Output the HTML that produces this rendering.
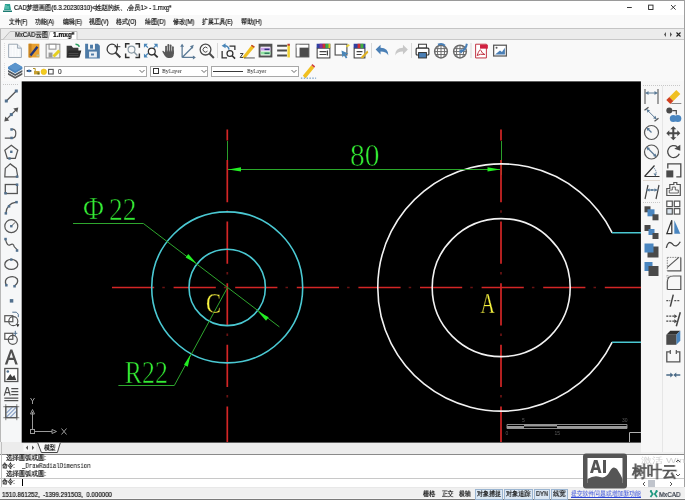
<!DOCTYPE html><html><head><meta charset="utf-8"><style>
*{box-sizing:border-box}
html,body{margin:0;padding:0}
body{width:685px;height:500px;overflow:hidden;position:relative;background:#f0f0f0;font-family:"Liberation Sans",sans-serif;color:#000}
.a{position:absolute}
.t{position:absolute;white-space:nowrap;line-height:1;-webkit-font-smoothing:antialiased;will-change:transform;-webkit-text-stroke:0.2px currentColor}
</style></head><body>
<div class="a" style="left:0px;top:0px;width:685px;height:15px;background:#fff"></div>
<div class="a" style="left:0px;top:0px;width:685px;height:1px;background:#9a9a9a"></div>
<div class="a" style="left:0px;top:15px;width:685px;height:13px;background:#f9f9f9"></div>
<div class="a" style="left:0px;top:28px;width:685px;height:12px;background:#ececec"></div>
<div class="a" style="left:0px;top:28px;width:685px;height:1px;background:#c4c4c4"></div>
<div class="a" style="left:0px;top:39px;width:685px;height:1px;background:#c8c8c8"></div>
<div class="a" style="left:0px;top:40px;width:685px;height:41px;background:#f9f9f9"></div>
<div class="a" style="left:0px;top:81px;width:22px;height:361px;background:#f6f7f8"></div>
<div class="a" style="left:0px;top:29px;width:1px;height:458px;background:#b8b8b8"></div>
<div class="a" style="left:641px;top:81px;width:43px;height:371px;background:#f7f7f7"></div>
<div class="a" style="left:662px;top:86px;width:1px;height:366px;background:#e6e6e6"></div>
<div class="a" style="left:684px;top:0px;width:1px;height:500px;background:#a0a0a0"></div>
<div class="a" style="left:22px;top:80px;width:619px;height:1px;background:#fff"></div>
<div class="a" style="left:0px;top:442px;width:641px;height:12px;background:#ececec"></div>
<div class="a" style="left:0px;top:454px;width:684px;height:33px;background:#fff"></div>
<div class="a" style="left:0px;top:453.5px;width:684px;height:1px;background:#8a8a8a"></div>
<div class="a" style="left:1px;top:442px;width:1px;height:45px;background:#c0c0c0"></div>
<div class="a" style="left:0px;top:477.5px;width:684px;height:1px;background:#c8c8c8"></div>
<div class="a" style="left:0px;top:487px;width:685px;height:13px;background:#f0f0f0"></div>
<div class="a" style="left:0px;top:487px;width:684px;height:1px;background:#e8e8e8"></div>
<div class="a" style="left:0px;top:498px;width:685px;height:1px;background:#f6f6f6"></div>
<div class="a" style="left:0px;top:499px;width:685px;height:1px;background:#7a7a7a"></div>
<svg class="a" style="left:0;top:0;will-change:transform" width="685" height="500" viewBox="0 0 685 500"><rect x="21.7" y="81.4" width="619.2" height="361.2" fill="#000"/><defs><clipPath id="cc"><rect x="22" y="81.5" width="619" height="361"/></clipPath></defs><g clip-path="url(#cc)" fill="none"><line x1="227.5" y1="141" x2="227.5" y2="175" stroke="#2a9e2a" stroke-width="1"/><line x1="501.5" y1="141" x2="501.5" y2="175" stroke="#2a9e2a" stroke-width="1"/><g stroke="#d42626" stroke-width="1.7"><line x1="112" y1="287.5" x2="641" y2="287.5" stroke-dasharray="42.2 19.4"/><line x1="227.3" y1="129.4" x2="227.3" y2="442" stroke-dasharray="42.2 19.4" stroke-dashoffset="31"/><line x1="501" y1="129.4" x2="501" y2="442" stroke-dasharray="42.2 19.4" stroke-dashoffset="31"/></g><g stroke="#d42626" stroke-width="1.7" opacity="0.5"><line x1="112" y1="287.5" x2="641" y2="287.5" stroke-dasharray="2.5 59.1" stroke-dashoffset="11.3"/><line x1="227.3" y1="205" x2="227.3" y2="442" stroke-dasharray="2.5 59.1" stroke-dashoffset="56.3"/><line x1="501" y1="205" x2="501" y2="442" stroke-dasharray="2.5 59.1" stroke-dashoffset="56.3"/></g><circle cx="227.2" cy="287.4" r="75.5" stroke="#4ac8d2" stroke-width="1.6"/><circle cx="227.2" cy="287.4" r="38.2" stroke="#4ac8d2" stroke-width="1.6"/><circle cx="501.2" cy="287.6" r="69" stroke="#f2f2f2" stroke-width="1.6"/><path d="M612.2 232.8 A123.6 123.6 0 1 0 612.2 342.2" stroke="#f2f2f2" stroke-width="1.6"/><line x1="612" y1="232.8" x2="641" y2="232.8" stroke="#4ac8d2" stroke-width="1.5"/><line x1="612" y1="342.2" x2="641" y2="342.2" stroke="#4ac8d2" stroke-width="1.5"/><line x1="228" y1="169.5" x2="500" y2="169.5" stroke="#2aa82a" stroke-width="1"/><path d="M228.3 169.4 L241 167.2 L241 171.6 Z" fill="#22ee22"/><path d="M500.2 169.4 L487.5 167.2 L487.5 171.6 Z" fill="#22ee22"/><polyline points="73,223.5 143.4,223.5 279.4,326.9" stroke="#2ea62e" stroke-width="1"/><path d="M196.5 263.5 L185.6 257.5 L188.3 254 Z" fill="#22ee22"/><path d="M257.8 311.2 L268.7 317.2 L266 320.7 Z" fill="#22ee22"/><polyline points="118.4,385.5 174.3,385.5 227.5,287.5" stroke="#2ea62e" stroke-width="1"/><path d="M190.6 354.5 L184 364.8 L187.8 366.8 Z" fill="#22ee22"/></g><g font-family="Liberation Serif" fill="#33ea33" stroke="#000" stroke-width="0.55"><text x="83" y="218.5" font-size="31" textLength="21" lengthAdjust="spacingAndGlyphs">Φ</text><text x="109" y="220.3" font-size="31" textLength="27.5" lengthAdjust="spacingAndGlyphs">22</text><text x="350" y="166" font-size="31" textLength="29.5" lengthAdjust="spacingAndGlyphs">80</text><text x="124.8" y="382.5" font-size="31.5" textLength="43" lengthAdjust="spacingAndGlyphs">R22</text></g><g font-family="Liberation Serif" fill="#f8f440" stroke="#000" stroke-width="0.35"><text x="206" y="312.8" font-size="29" textLength="15" lengthAdjust="spacingAndGlyphs">C</text><text x="480.5" y="312.8" font-size="29" textLength="14.5" lengthAdjust="spacingAndGlyphs">A</text></g><g stroke="#9a9a9a" stroke-width="1" fill="none"><rect x="30.5" y="429.5" width="4" height="4"/><line x1="32.5" y1="429.5" x2="32.5" y2="412"/><path d="M30.5 414 L32.5 409.5 L34.5 414 Z"/><line x1="34.5" y1="431.5" x2="52" y2="431.5"/><path d="M52 429.5 L56.5 431.5 L52 433.5 Z"/><path d="M30.5 398 L32.5 401 L34.5 398 M32.5 401 V404"/><path d="M61.5 428.5 L66.5 434.5 M66.5 428.5 L61.5 434.5"/></g><g fill="none" stroke="#8a8a8a" stroke-width="1"><path d="M507 424.5H627M507 428.5H627M507 424.5V428.5M627 424.5V428.5"/></g><rect x="507" y="426" width="17" height="2.5" fill="#9a9a9a"/><rect x="524" y="424.5" width="33" height="2" fill="#9a9a9a"/><rect x="557" y="426" width="70" height="2.5" fill="#9a9a9a"/><g font-family="Liberation Sans" font-size="5" fill="#5a5a5a"><text x="522" y="421.5">5</text><text x="622" y="421.5">30</text><text x="505.5" y="435">0</text><text x="554.5" y="435">15</text></g><path d="M629.5 442V432.5H641" stroke="#b0b0b0" fill="none"/><g transform="translate(7.16,42.760000000000005) scale(0.98)"><path d="M1.5 1.5h9l4 4v9.5h-13z" fill="#fbfcfd" stroke="#9aa6b2"/><path d="M4 3v11M7 3v11M10 6v8M13 6v8" stroke="#e8edf2" stroke-width=".6"/><path d="M10.5 1.5v4h4" fill="#e4eaf0" stroke="#9aa6b2"/></g><g transform="translate(25.66,42.760000000000005) scale(0.98)"><rect x="3" y="1" width="11" height="14" fill="#e8a030"/><rect x="3" y="1" width="3" height="14" fill="#c98420"/><path d="M12 4 L5 13" stroke="#23367a" stroke-width="2.4"/><path d="M11 13h3" stroke="#b9c4a0" stroke-width="2"/></g><g transform="translate(44.66,42.760000000000005) scale(0.98)"><rect x="1.5" y="1.5" width="14" height="14" fill="#f4f4f4" stroke="#8c8c8c"/><rect x="4.5" y="1.5" width="7" height="5" fill="#fff" stroke="#8c8c8c"/><rect x="4" y="10" width="4" height="5" fill="#9a9a9a"/><path d="M9 14 L15 8" stroke="#e6d020" stroke-width="3"/></g><g transform="translate(65.66,42.760000000000005) scale(0.98)"><path d="M1 3h5l1.5 2H13v10H1z" fill="#3a3a3a"/><path d="M1 15 L3 8h13l-2 7z" fill="#2a2a2a"/><path d="M3 11h10M3 13h10" stroke="#555" stroke-width=".8"/><path d="M10 1.5 Q13 1.5 14 4" stroke="#2aa060" stroke-width="1.5" fill="none"/></g><g transform="translate(84.16,42.760000000000005) scale(0.98)"><path d="M1 1h3v6h7V1h3l2 2v13H1z" fill="#4d7aa6"/><rect x="6" y="2" width="3" height="4" fill="#4d7aa6"/><rect x="5" y="9" width="8" height="6" fill="#e8eef4"/><rect x="7" y="11" width="3" height="2" fill="#4d7aa6"/></g><g transform="translate(105.66,42.760000000000005) scale(0.98)"><circle cx="6.5" cy="6.5" r="5" fill="none" stroke="#3c3c3c" stroke-width="1.3"/><path d="M10 10 L15 15" stroke="#3c3c3c" stroke-width="2"/><path d="M12 1v6M9 4h6" stroke="#3c3c3c" stroke-width="1"/></g><g transform="translate(124.66,42.760000000000005) scale(0.98)"><path d="M1 5V1h4M11 1h4v4M15 11v4h-4M5 15H1v-4" fill="none" stroke="#303030" stroke-width="1.5"/><circle cx="7" cy="7" r="3.5" fill="none" stroke="#8a9aa5" stroke-width="1.2"/><path d="M9.5 9.5 L13 13" stroke="#8a9aa5" stroke-width="1.5"/></g><g transform="translate(142.96,42.760000000000005) scale(0.98)"><path d="M1 1h4L1 5z M15 1h-4l4 4z M1 15h4l-4-4z" fill="#4a86b8"/><path d="M2 2l3 3M14 2l-3 3M2 14l3-3" stroke="#4a86b8" stroke-width="1.3"/><circle cx="9" cy="9" r="3.5" fill="#fff" stroke="#303030" stroke-width="1.3"/><path d="M11.5 11.5 L15 15" stroke="#303030" stroke-width="1.8"/></g><g transform="translate(160.66,42.760000000000005) scale(0.98)"><g fill="#585858"><rect x="4.6" y="3" width="1.9" height="8" rx=".9"/><rect x="6.9" y="1.2" width="1.9" height="9" rx=".9"/><rect x="9.2" y="1.8" width="1.9" height="9" rx=".9"/><rect x="11.5" y="3.6" width="1.9" height="8" rx=".9"/><path d="M4.6 8 H13.4 V11.5 Q13.4 15.5 9.5 15.5 H7.5 Q5.5 15.5 4 13 L1.8 9.3 Q1.5 8 2.8 8.3 L4.6 10z"/></g><path d="M6.7 4v5M9 3v6M11.3 4v5" stroke="#f4f4f4" stroke-width=".35"/></g><g transform="translate(180.16,42.760000000000005) scale(0.98)"><path d="M2 15V2M2 15h13M2 15L13 4" stroke="#5b7a96" stroke-width="1.3" fill="none"/><path d="M0 4l2-3 2 3zM13 13l3 2-3 2zM10 3.5l4-1.5-1.5 4z" fill="#5b7a96"/></g><g transform="translate(198.66,42.760000000000005) scale(0.98)"><circle cx="7" cy="7" r="5.5" fill="none" stroke="#4a4a4a" stroke-width="1.3"/><path d="M11 11 L15.5 15.5" stroke="#4a4a4a" stroke-width="2"/><path d="M9 5.5 A2.5 2.5 0 1 0 9 8.5" fill="none" stroke="#4a4a4a" stroke-width="1"/></g><g transform="translate(220.66,42.760000000000005) scale(0.98)"><path d="M9 3.5h5.5v4M1.5 8.5v7h5" fill="none" stroke="#303030" stroke-width="1.3"/><path d="M1 3 L5 0.5 V5.5z" fill="#4a86b8"/><path d="M4 3 Q8 3 8.5 7" fill="none" stroke="#4a86b8" stroke-width="1.6"/><circle cx="9.5" cy="11" r="3" fill="none" stroke="#303030" stroke-width="1.3"/><path d="M11.7 13.2l3 3" stroke="#303030" stroke-width="1.6"/></g><g transform="translate(239.16,42.760000000000005) scale(0.98)"><path d="M3 15 L13 2 L16 4 L6 16z" fill="#f0c020"/><path d="M13 2 L16 4 L15 5 L12 3z" fill="#c04030"/><path d="M1 11h3l-3 4h3" fill="none" stroke="#333" stroke-width="1"/><path d="M5 15.5h11" stroke="#555" stroke-width="1"/></g><g transform="translate(257.66,42.760000000000005) scale(0.98)"><rect x="1" y="1" width="14" height="14" fill="#505050"/><rect x="3" y="4" width="10" height="9" fill="#fff"/><rect x="3" y="5" width="10" height="3" fill="#c8a0e8"/><rect x="3" y="9" width="10" height="3" fill="#90e0a0"/><rect x="7" y="6" width="5" height="1.5" fill="#303080"/><rect x="7" y="10" width="5" height="1.5" fill="#308060"/></g><g transform="translate(276.16,42.760000000000005) scale(0.98)"><path d="M1 3h10M1 8h10M1 13h10" stroke="#4c4c4c" stroke-width="2"/><rect x="11.5" y="2" width="2.5" height="13" fill="#f0d030"/><rect x="11.5" y="1" width="2.5" height="2" fill="#c04030"/></g><g transform="translate(294.66,42.760000000000005) scale(0.98)"><rect x="1.5" y="1.5" width="13" height="13" fill="#4c4c4c" stroke="#555"/><rect x="2" y="2" width="12" height="3" fill="#fff"/><rect x="2" y="2" width="3" height="12" fill="#fff"/></g><g transform="translate(315.66,42.760000000000005) scale(0.98)"><rect x="1.5" y="5.5" width="13" height="10" fill="#fff" stroke="#333"/><rect x="1" y="1" width="14" height="4.5" fill="#3040a0"/><rect x="4" y="1" width="3" height="4.5" fill="#8030a0"/><rect x="7" y="1" width="3" height="4.5" fill="#d03030"/><rect x="10" y="1" width="3" height="4.5" fill="#40b040"/><rect x="13" y="1" width="2" height="4.5" fill="#e0c020"/><path d="M4 9h7M4 12h7M12 8v5" stroke="#444" stroke-width="1.2"/></g><g transform="translate(333.66,42.760000000000005) scale(0.98)"><rect x="1.5" y="1.5" width="12" height="11" fill="#fff" stroke="#555" stroke-width="1.2"/><path d="M8 8 L15 11 L12 12 L14 15 L12.5 16 L10.5 13 L9 15z" fill="#4a86b8"/><path d="M13 4l3-2" stroke="#e8d040" stroke-width="2"/></g><g transform="translate(352.66,42.760000000000005) scale(0.98)"><rect x="1.5" y="5.5" width="11" height="10" fill="#fff" stroke="#333"/><rect x="1" y="1" width="12" height="4.5" fill="#3040a0"/><rect x="5" y="1" width="3" height="4.5" fill="#d03030"/><rect x="8" y="1" width="3" height="4.5" fill="#40b040"/><path d="M4 9h6M4 12h5" stroke="#444" stroke-width="1.2"/><path d="M8 15 L15 8 L16 10 L10 16z" fill="#e0b020"/></g><g transform="translate(374.66,42.760000000000005) scale(0.98)"><path d="M1 7 L6 2 L6 5 Q14 5 14 13 Q12 9 6 9 L6 12z" fill="#4a7fb5"/></g><g transform="translate(393.16,42.760000000000005) scale(0.98)"><path d="M15 7 L10 2 L10 5 Q2 5 2 13 Q4 9 10 9 L10 12z" fill="#c8c8c8"/></g><g transform="translate(414.66,42.760000000000005) scale(0.98)"><rect x="4" y="1.5" width="8" height="4" fill="#fff" stroke="#333"/><rect x="1.5" y="5.5" width="13" height="7" rx="1" fill="#fff" stroke="#333" stroke-width="1.2"/><rect x="4" y="10" width="8" height="5.5" fill="#4a7fb5" stroke="#333"/></g><g transform="translate(433.16,42.760000000000005) scale(0.98)"><circle cx="8" cy="9" r="6.5" fill="#fff" stroke="#6a6a6a" stroke-width="1.5"/><path d="M1.5 9h13M2.5 6h11M2.5 12h11M8 2.5v13M5 3.5 Q3.5 9 5 14.5M11 3.5 Q12.5 9 11 14.5" stroke="#6a6a6a" stroke-width="1" fill="none"/><path d="M5 2 Q9 0 12 3" stroke="#4a7fb5" stroke-width="2" fill="none"/></g><g transform="translate(452.16,42.760000000000005) scale(0.98)"><circle cx="8" cy="9" r="6.5" fill="#fff" stroke="#6a6a6a" stroke-width="1.5"/><path d="M1.5 9h13M2.5 6h11M2.5 12h11M8 2.5v13M5 3.5 Q3.5 9 5 14.5M11 3.5 Q12.5 9 11 14.5" stroke="#6a6a6a" stroke-width="1" fill="none"/><path d="M15 1 Q14 8 8 9" stroke="#4a7fb5" stroke-width="2" fill="none"/><path d="M7 9l3-3v5z" fill="#4a7fb5"/></g><g transform="translate(473.16,42.760000000000005) scale(0.98)"><path d="M2.5 1.5h11v14h-11z" fill="#fff" stroke="#c03040"/><rect x="7" y="2" width="8" height="4" fill="#d02040"/><path d="M4 13 Q7 5 8 8 Q9 11 12 12 Q7 11 4 13" fill="none" stroke="#c03040" stroke-width="1"/></g><g transform="translate(492.16,42.760000000000005) scale(0.98)"><rect x="1.5" y="2.5" width="13" height="11" fill="#fff" stroke="#5a5a5a" stroke-width="1.3"/><path d="M3 12 L8 8 L10 9.5 L13 5 V12z" fill="#4a7fb5"/><circle cx="4.5" cy="5" r="1" fill="#5a5a5a"/></g><line x1="217.5" y1="43" x2="217.5" y2="58" stroke="#d8d8d8"/><line x1="371.5" y1="43" x2="371.5" y2="58" stroke="#d8d8d8"/><line x1="411.5" y1="43" x2="411.5" y2="58" stroke="#d8d8d8"/><line x1="471" y1="43" x2="471" y2="58" stroke="#d8d8d8"/><line x1="4.5" y1="43" x2="4.5" y2="58" stroke="#dcdcdc" stroke-dasharray="1 1"/><line x1="4.5" y1="63" x2="4.5" y2="78" stroke="#dcdcdc" stroke-dasharray="1 1"/><g transform="translate(6.399999999999999,61.7) scale(1.1)"><path d="M1.5 10 L8 13.6 L14.5 10 V11.8 L8 15.4 L1.5 11.8z" fill="#5a5a5a"/><path d="M1.5 7.6 L8 11.2 L14.5 7.6 V9.4 L8 13 L1.5 9.4z" fill="#505860"/><path d="M8 1 L14.5 4.8 V6.6 L8 10.4 L1.5 6.6 V4.8z" fill="#4a84bc"/><path d="M8 1 L14.5 4.8 L8 8.6 L1.5 4.8z" fill="#5a94cc"/></g><g transform="translate(300.9,63.4) scale(0.95)"><path d="M2 13 L11 2 L14 4.5 L5 15.5z" fill="#f0c020"/><path d="M11 2 L14 4.5 L15 3 L12 0.5z" fill="#d04040"/><path d="M0 15.5h16" stroke="#4a7fb5" stroke-width="1" stroke-dasharray="1.5 1.5"/></g><g transform="translate(3.3000000000000007,88.0) scale(1.0)"><path d="M3 13 L13 3" stroke="#555" stroke-width="1.2"/><rect x="1.5" y="11.5" width="3" height="3" fill="#52708e"/><rect x="11.5" y="1.5" width="3" height="3" fill="#52708e"/></g><g transform="translate(3.3000000000000007,106.6) scale(1.0)"><path d="M2 14 L14 2" stroke="#555" stroke-width="1.3"/><path d="M1 15 L2 10 L6 14z M15 1 L10 2 L14 6z" fill="#555"/><rect x="6.5" y="6.5" width="3" height="3" fill="#52708e"/></g><g transform="translate(3.3000000000000007,125.19999999999999) scale(1.0)"><path d="M1.5 13h7 Q12.5 13 12.5 8 Q12.5 4 9 4" fill="none" stroke="#555" stroke-width="1.2"/><rect x="7" y="3" width="2.5" height="2.5" fill="#52708e"/><rect x="7" y="11.5" width="2.5" height="2.5" fill="#52708e"/></g><g transform="translate(3.3000000000000007,143.8) scale(1.0)"><path d="M8 1.5 L14.5 6.5 L12 14.5 H4 L1.5 6.5z" fill="none" stroke="#555" stroke-width="1.2"/><rect x="6.8" y="6.8" width="2.4" height="2.4" fill="#52708e"/><rect x="5" y="13.5" width="2.4" height="2.4" fill="#52708e"/></g><g transform="translate(3.3000000000000007,162.4) scale(1.0)"><path d="M2 6 L7 1.5 L13 6 L14.5 14.5 H1.5z" fill="none" stroke="#555" stroke-width="1.2"/><rect x="12.5" y="13" width="2.4" height="2.4" fill="#52708e"/></g><g transform="translate(3.3000000000000007,181.0) scale(1.0)"><rect x="2" y="3.5" width="12" height="9" fill="none" stroke="#555" stroke-width="1.3"/><rect x="1" y="11" width="2.5" height="2.5" fill="#52708e"/><rect x="12.5" y="2.5" width="2.5" height="2.5" fill="#52708e"/></g><g transform="translate(3.3000000000000007,199.60000000000002) scale(1.0)"><path d="M2.5 14 Q3 4 13 2.5" fill="none" stroke="#555" stroke-width="1.2"/><rect x="1.3" y="12.5" width="2.5" height="2.5" fill="#52708e"/><rect x="4.5" y="5.5" width="2.5" height="2.5" fill="#52708e"/><rect x="12" y="1.3" width="2.5" height="2.5" fill="#52708e"/></g><g transform="translate(3.3000000000000007,218.20000000000002) scale(1.0)"><circle cx="8" cy="8" r="6.5" fill="none" stroke="#555" stroke-width="1.2"/><path d="M8 8 L12 4" stroke="#555"/><rect x="6.8" y="6.8" width="2.4" height="2.4" fill="#52708e"/></g><g transform="translate(3.3000000000000007,236.8) scale(1.0)"><path d="M2 2 Q4 10 7 8 Q10 6 11 10 L14 13" fill="none" stroke="#555" stroke-width="1.2"/><rect x="1" y="1" width="2.5" height="2.5" fill="#52708e"/><rect x="12.5" y="12.5" width="2.5" height="2.5" fill="#52708e"/></g><g transform="translate(3.3000000000000007,255.39999999999998) scale(1.0)"><ellipse cx="8" cy="9" rx="6.5" ry="5" fill="none" stroke="#555" stroke-width="1.3"/><rect x="6.8" y="3" width="2.4" height="2.4" fill="#52708e"/></g><g transform="translate(3.3000000000000007,274.0) scale(1.0)"><path d="M3 11 Q0.5 6 5 3.5 Q11 1 14 5 Q15.5 9 11 12" fill="none" stroke="#555" stroke-width="1.3"/><rect x="1.8" y="10" width="2.5" height="2.5" fill="#52708e"/><rect x="10" y="11" width="2.5" height="2.5" fill="#52708e"/></g><g transform="translate(3.3000000000000007,292.6) scale(1.0)"><rect x="6.5" y="6.5" width="3.5" height="3.5" fill="#52708e"/></g><g transform="translate(3.3000000000000007,311.20000000000005) scale(1.0)"><rect x="1.5" y="4.5" width="8" height="6" fill="#fff" stroke="#555" stroke-width="1.2"/><circle cx="10" cy="10" r="4.5" fill="none" stroke="#555" stroke-width="1.2"/><path d="M9 1h4l2 2v3" fill="none" stroke="#52708e"/><path d="M13 13l3 0-1.5 3z" fill="#222"/></g><g transform="translate(3.3000000000000007,329.8) scale(1.0)"><rect x="1.5" y="3.5" width="8" height="6" fill="#fff" stroke="#555" stroke-width="1.2"/><circle cx="9.5" cy="10" r="4.5" fill="none" stroke="#555" stroke-width="1.2"/><path d="M12 1v5M10 3.5h4" stroke="#52708e" stroke-width="1"/></g><g transform="translate(3.3000000000000007,348.40000000000003) scale(1.0)"><path d="M1.5 16 L7 1 H9 L14.5 16 H12 L10.5 11.5 H5.5 L4 16z M6.3 9.3 H9.7 L8 4z" fill="#505050"/></g><g transform="translate(3.3000000000000007,367.0) scale(1.0)"><rect x="1.5" y="1.5" width="13" height="13" fill="#fff" stroke="#555" stroke-width="1.3"/><path d="M3 13 L7 7 L9 10 L11 8 L13 13z" fill="#404040"/><circle cx="4.5" cy="4.5" r="1.3" fill="#52708e"/></g><g transform="translate(3.3000000000000007,385.6) scale(1.0)"><path d="M1 10 L3.5 2 H4.5 L7 10 M2 7h4" fill="none" stroke="#505050" stroke-width="1.2"/><path d="M8 3h7M8 6h7M8 9h7M1 12.5h14M1 15h14" stroke="#505050" stroke-width="1.2"/></g><g transform="translate(3.3000000000000007,404.20000000000005) scale(1.0)"><rect x="2.5" y="2.5" width="11" height="11" fill="#e8eef4" stroke="#555" stroke-width="1.2"/><path d="M3 9l6-6M3 13l10-10M7 13l6-6" stroke="#5a7ab0" stroke-width="1"/><path d="M0 2.5h16M0 13.5h16M2.5 0v16M13.5 0v16" stroke="#555" stroke-width=".7"/></g><line x1="3" y1="84.5" x2="19" y2="84.5" stroke="#c8c8c8" stroke-dasharray="1 1"/><g transform="translate(643.5,88.0) scale(1.0)"><path d="M1.5 1v15M14.5 1v15" stroke="#666" stroke-width="1.2"/><path d="M2 5h12" stroke="#5b7a96"/><path d="M2 5l3-2v4zM14 5l-3-2v4z" fill="#5b7a96"/></g><g transform="translate(643.5,106.3) scale(1.0)"><path d="M1 4 L5 1M11 15 L15 12" stroke="#555" stroke-width="1.3"/><path d="M3 3 L13 13" stroke="#5b7a96"/><path d="M3 3l1 3.5 2.5-2.5zM13 13l-1-3.5-2.5 2.5z" fill="#5b7a96"/></g><g transform="translate(643.5,124.5) scale(1.0)"><circle cx="8" cy="8" r="7" fill="none" stroke="#555" stroke-width="1.2"/><path d="M8 8 L4 4" stroke="#5b7a96" stroke-width="1.2"/><path d="M3 3l1 3.5 2.5-2.5z" fill="#5b7a96"/></g><g transform="translate(643.5,144.0) scale(1.0)"><circle cx="8" cy="8" r="7" fill="none" stroke="#555" stroke-width="1.2"/><path d="M3.5 3.5 L12.5 12.5" stroke="#5b7a96" stroke-width="1.2"/><path d="M3 3l1 3.5 2.5-2.5zM13 13l-1-3.5-2.5 2.5z" fill="#5b7a96"/></g><g transform="translate(643.5,162.5) scale(1.0)"><path d="M1 14 L11 3M1 14h15" stroke="#333" stroke-width="1.2"/><path d="M10 5 Q14 9 12 13" fill="none" stroke="#5b7a96" stroke-dasharray="1.5 1"/><path d="M12 14l-2-3h3z" fill="#5b7a96"/></g><g transform="translate(643.5,184.0) scale(1.0)"><path d="M1.5 15 L4.5 1M12.5 15 L15.5 1" stroke="#444" stroke-width="1.2"/><path d="M3 6h11" stroke="#5b7a96" stroke-width="1.2"/><path d="M3.5 6l2.5-1.8v3.6zM13.5 6l-2.5-1.8v3.6z" fill="#5b7a96"/><circle cx="8.5" cy="6" r="1.1" fill="#5b7a96"/></g><g transform="translate(643.5,205.3) scale(1.0)"><rect x="1" y="1" width="6" height="6" fill="#4a4a4a"/><rect x="4" y="4" width="7" height="7" fill="#4a86c0"/><rect x="9" y="9" width="6" height="6" fill="#4a4a4a"/></g><g transform="translate(643.5,224.0) scale(1.0)"><rect x="1" y="1" width="6" height="6" fill="#4a4a4a"/><rect x="5" y="5" width="6" height="6" fill="#4a86c0"/><rect x="9" y="9" width="6" height="6" fill="#4a4a4a"/></g><g transform="translate(643.5,242.5) scale(1.0)"><rect x="4" y="4" width="11" height="11" fill="#4a4a4a"/><rect x="1" y="1" width="9" height="9" fill="#4a86c0"/></g><g transform="translate(643.5,261.0) scale(1.0)"><rect x="1" y="1" width="8" height="9" fill="#4a86c0"/><rect x="5" y="5" width="10" height="10" fill="#4a4a4a"/></g><line x1="643" y1="180.5" x2="660" y2="180.5" stroke="#e0d8d0"/><line x1="643" y1="202.5" x2="660" y2="202.5" stroke="#c8c8c8" stroke-dasharray="1 1"/><g transform="translate(665.3,88.0) scale(1.0)"><path d="M4 9 L11 2 L15 6 L8 13z" fill="#f0c020"/><path d="M1 12 L4 9 L8 13 L5 16z" fill="#d04020"/><path d="M6 15.5h10" stroke="#888"/></g><g transform="translate(665.3,106.6) scale(1.0)"><circle cx="4" cy="4" r="3" fill="#4a4a4a"/><path d="M7 4h4v4" fill="none" stroke="#4a4a4a" stroke-width="1.2"/><circle cx="8" cy="12" r="3.5" fill="#4a86c0"/><circle cx="12.5" cy="12" r="3.5" fill="#4a86c0"/></g><g transform="translate(665.3,125.19999999999999) scale(1.0)"><path d="M8 1 L11 4 H9 V7 H12 V5 L15 8 L12 11 V9 H9 V12 H11 L8 15 L5 12 H7 V9 H4 V11 L1 8 L4 5 V7 H7 V4 H5z" fill="#4a4a4a"/></g><g transform="translate(665.3,143.8) scale(1.0)"><path d="M12 3 A6 6 0 1 0 14 10" fill="none" stroke="#4a4a4a" stroke-width="1.3"/><path d="M9 5 L15 1 L15 7z" fill="#4a4a4a"/></g><g transform="translate(665.3,162.4) scale(1.0)"><path d="M2.5 6V1.5h13v13H11" fill="none" stroke="#4a4a4a" stroke-width="1.3"/><rect x="1" y="8" width="7" height="7" fill="#4a4a4a"/></g><g transform="translate(665.3,181.0) scale(1.0)"><path d="M1.5 14.5v-7h3v-4h4v-2h3v2h3.5v11z" fill="none" stroke="#555" stroke-width="1.2"/><path d="M4 12v-3h3v-3h3v3h3v3z" fill="none" stroke="#555" stroke-width=".9"/></g><g transform="translate(665.3,199.60000000000002) scale(1.0)"><rect x="1.5" y="1.5" width="5.5" height="5.5" fill="#fff" stroke="#555" stroke-width="1.2"/><rect x="9" y="1.5" width="5.5" height="5.5" fill="#fff" stroke="#555" stroke-width="1.2"/><rect x="1.5" y="9" width="5.5" height="5.5" fill="#dbe6f0" stroke="#555" stroke-width="1.2"/><rect x="9" y="9" width="5.5" height="5.5" fill="#fff" stroke="#555" stroke-width="1.2"/></g><g transform="translate(665.3,218.20000000000002) scale(1.0)"><path d="M1.5 15.5 L6.5 2 V15.5z" fill="#fff" stroke="#333" stroke-width="1.2"/><path d="M9 2 L15 15.5 H9z" fill="#4a86c0"/></g><g transform="translate(665.3,236.8) scale(1.0)"><path d="M1 11 Q3 3 7 7 Q11 12 15 5" fill="none" stroke="#444" stroke-width="1.3"/></g><g transform="translate(665.3,255.39999999999998) scale(1.0)"><path d="M2 15.5H15.5V2" fill="none" stroke="#555" stroke-width="1.2"/><path d="M2 2H15.5M2 2V15.5" fill="none" stroke="#888" stroke-width="1" stroke-dasharray="1.5 1"/><path d="M2 12 L13.5 2" stroke="#555" stroke-width="1.2"/></g><g transform="translate(665.3,274.0) scale(1.0)"><path d="M2 15.5H15.5V2H8 Q2 2 2 8V15.5" fill="none" stroke="#555" stroke-width="1.2"/><path d="M2 1V6M1 2H6" stroke="#999" stroke-width=".8" stroke-dasharray="1 1"/></g><g transform="translate(665.3,292.6) scale(1.0)"><path d="M1 8h4M9 8h6" stroke="#555" stroke-width="1.3" stroke-dasharray="2 1"/><path d="M5 14 L8 2" stroke="#444" stroke-width="1.5"/></g><g transform="translate(665.3,311.20000000000005) scale(1.0)"><path d="M1 5h9M1 10h9" stroke="#444" stroke-width="1.3" stroke-dasharray="2 1"/><path d="M9 3l3 2-3 2z M9 8l3 2-3 2z" fill="#444"/><path d="M11 15 L15 1" stroke="#444" stroke-width="1.5"/></g><g transform="translate(665.3,329.8) scale(1.0)"><path d="M1 5 L5 1 H15 L11 5z" fill="#303030"/><path d="M11 5 L15 1 V11 L11 15z" fill="#4a86c0"/><rect x="1" y="5" width="10" height="10" fill="#4a4a4a"/></g><g transform="translate(665.3,348.40000000000003) scale(1.0)"><path d="M5 3.5H1.5v10h13v-10H11" fill="none" stroke="#555" stroke-width="1.3"/><path d="M5 1.5v4M11 1.5v4" stroke="#555" stroke-width="1.2"/></g><g transform="translate(665.3,367.0) scale(1.0)"><path d="M1 8h5M10 8h5" stroke="#4a6a86" stroke-width="1.3"/><path d="M8 8l-3-2.5v5zM8 8l3-2.5v5z" fill="#4a6a86"/></g><line x1="643" y1="85.5" x2="681" y2="85.5" stroke="#c8c8c8" stroke-dasharray="1 1"/></svg>
<svg class="a" style="left:3px;top:3px" width="9" height="9" viewBox="0 0 9 9"><path d="M2 1h5l1 6H1z" fill="#2aa090"/><path d="M0 7.5h9v1.5H0z" fill="#1a7a70"/><path d="M3 2v4M5 3v3" stroke="#8fe0d0" stroke-width=".8"/></svg>
<div class="t" style="left:13.5px;top:4.9px;font-family:'Liberation Sans',sans-serif;font-size:6.8px;color:#111;transform:scaleX(0.8835);transform-origin:0 0;">CAD梦想画图(6.3.20230310)&lt;姓赵的妖、,会员1&gt; - 1.mxg*</div>
<svg class="a" style="left:620px;top:0" width="64" height="15" viewBox="0 0 64 15"><path d="M7 7.5h4.8" stroke="#222" stroke-width=".9"/><rect x="28.6" y="5.1" width="4.4" height="4.4" fill="none" stroke="#222" stroke-width=".9"/><path d="M51 5l4.6 4.6M55.6 5l-4.6 4.6" stroke="#222" stroke-width=".9"/></svg>
<div class="t" style="left:8.6px;top:18.7px;font-family:'Liberation Sans',sans-serif;font-size:6.6px;color:#111;transform:scaleX(0.8251);transform-origin:0 0;">文件(F)</div>
<div class="t" style="left:35px;top:18.7px;font-family:'Liberation Sans',sans-serif;font-size:6.6px;color:#111;transform:scaleX(0.8334);transform-origin:0 0;">功能(A)</div>
<div class="t" style="left:62.8px;top:18.7px;font-family:'Liberation Sans',sans-serif;font-size:6.6px;color:#111;transform:scaleX(0.8334);transform-origin:0 0;">编辑(E)</div>
<div class="t" style="left:89px;top:18.7px;font-family:'Liberation Sans',sans-serif;font-size:6.6px;color:#111;transform:scaleX(0.8598);transform-origin:0 0;">视图(V)</div>
<div class="t" style="left:116.2px;top:18.7px;font-family:'Liberation Sans',sans-serif;font-size:6.6px;color:#111;transform:scaleX(0.8669);transform-origin:0 0;">格式(O)</div>
<div class="t" style="left:144.5px;top:18.7px;font-family:'Liberation Sans',sans-serif;font-size:6.6px;color:#111;transform:scaleX(0.8853);transform-origin:0 0;">绘图(D)</div>
<div class="t" style="left:173px;top:18.7px;font-family:'Liberation Sans',sans-serif;font-size:6.6px;color:#111;transform:scaleX(0.8874);transform-origin:0 0;">修改(M)</div>
<div class="t" style="left:202px;top:18.7px;font-family:'Liberation Sans',sans-serif;font-size:6.6px;color:#111;transform:scaleX(0.8343);transform-origin:0 0;">扩展工具(E)</div>
<div class="t" style="left:240.6px;top:18.7px;font-family:'Liberation Sans',sans-serif;font-size:6.6px;color:#111;transform:scaleX(0.8896);transform-origin:0 0;">帮助(H)</div>
<svg class="a" style="left:0;top:28px" width="685" height="12" viewBox="0 0 685 12"><path d="M3 11.5 L10 3.5 H49 L51 11.5" fill="#e6e6e6" stroke="#bdbdbd"/><path d="M48 11.5 L50 3.5 H77 V11.5" fill="#fff" stroke="#bdbdbd"/><path d="M666 4l-2 2.5 2 2.5zM670 4l2 2.5-2 2.5z" fill="#555"/><path d="M676.5 4.5l4 4M680.5 4.5l-4 4" stroke="#222" stroke-width="1.1"/></svg>
<div class="t" style="left:14.6px;top:32.3px;font-family:'Liberation Sans',sans-serif;font-size:6.6px;color:#111;transform:scaleX(0.8933);transform-origin:0 0;">MxCAD云图</div>
<div class="t" style="left:53.3px;top:32.3px;font-family:'Liberation Sans',sans-serif;font-size:6.6px;color:#000;font-weight:bold;transform:scaleX(0.9803);transform-origin:0 0;">1.mxg*</div>
<div class="a" style="left:23.5px;top:66px;width:123px;height:11px;background:#fff;border:1px solid #a8a8a8"></div>
<div class="a" style="left:149.5px;top:66px;width:58.5px;height:11px;background:#fff;border:1px solid #a8a8a8"></div>
<div class="a" style="left:210.5px;top:66px;width:88.5px;height:11px;background:#fff;border:1px solid #a8a8a8"></div>
<svg class="a" style="left:0;top:60px" width="320" height="21" viewBox="0 0 320 21"><path d="M26 11 Q29 8.6 32 11 Q29 13.2 26 11z" fill="#1a2a40"/><circle cx="29.2" cy="11" r="1.3" fill="#3a70b0"/><path d="M33 8.5h2.2v3" fill="none" stroke="#b09020" stroke-width="1"/><rect x="34" y="11" width="5.6" height="3.4" fill="#c8a030"/><rect x="37.5" y="12.5" width="2" height="2" fill="#6a6a20"/><circle cx="43.8" cy="11.8" r="2.8" fill="#f2cc20" stroke="#e8b000" stroke-width=".5"/><rect x="48.6" y="9.4" width="4.6" height="4.6" fill="#fff" stroke="#555" stroke-width="1.1"/><path d="M139.5 10l2.5 2.5 2.5-2.5M201.5 10l2.5 2.5 2.5-2.5M291.5 10l2.5 2.5 2.5-2.5" fill="none" stroke="#555" stroke-width=".9"/><rect x="153.5" y="8.5" width="5" height="5" fill="#fff" stroke="#333"/><path d="M213 11.5h30" stroke="#222" stroke-width=".9"/></svg>
<div class="t" style="left:58px;top:69px;font-family:'Liberation Sans',sans-serif;font-size:6.5px;color:#444;">0</div>
<div class="t" style="left:162px;top:68.3px;font-family:'Liberation Serif',serif;font-size:6.8px;color:#222;-webkit-text-stroke:0;transform:scaleX(0.8284);transform-origin:0 0;">ByLayer</div>
<div class="t" style="left:247px;top:68.3px;font-family:'Liberation Serif',serif;font-size:6.8px;color:#222;-webkit-text-stroke:0;transform:scaleX(0.8074);transform-origin:0 0;">ByLayer</div>
<svg class="a" style="left:0;top:442px" width="120" height="12" viewBox="0 0 120 12"><rect x="23.5" y="2" width="6" height="7.5" fill="#f7f7f7"/><rect x="30" y="2" width="6" height="7.5" fill="#f7f7f7"/><path d="M28 3.5l-2.2 2.2 2.2 2.2zM32 3.5l2.2 2.2-2.2 2.2z" fill="#555"/><path d="M37.7 0.8 L41.4 10.5 H57.4 L60.3 0.8" fill="#fafafa" stroke="#333" stroke-width=".9"/></svg>
<div class="t" style="left:43.9px;top:444.7px;font-family:'Liberation Sans',sans-serif;font-size:6.5px;color:#111;transform:scaleX(0.8143);transform-origin:0 0;">模型</div>
<div class="t" style="left:6.4px;top:455.1px;font-family:'Liberation Sans',sans-serif;font-size:6.8px;color:#111;transform:scaleX(0.9114);transform-origin:0 0;">选择圆弧或圆:</div>
<div class="t" style="left:2.4px;top:463.2px;font-family:'Liberation Sans',sans-serif;font-size:6.8px;color:#111;transform:scaleX(0.8055);transform-origin:0 0;">命令:</div>
<div class="t" style="left:22px;top:463px;font-family:'Liberation Mono',monospace;font-size:7px;color:#222;-webkit-text-stroke:0.1px #222;transform:scaleX(0.8165);transform-origin:0 0;">_DrawRadialDimension</div>
<div class="t" style="left:6.4px;top:471.1px;font-family:'Liberation Sans',sans-serif;font-size:6.8px;color:#111;transform:scaleX(0.9114);transform-origin:0 0;">选择圆弧或圆:</div>
<div class="t" style="left:2.4px;top:479.1px;font-family:'Liberation Sans',sans-serif;font-size:6.8px;color:#111;transform:scaleX(0.8055);transform-origin:0 0;">命令:</div>
<div class="a" style="left:22px;top:479.2px;width:1px;height:6.4px;background:#000"></div>
<div class="t" style="left:2px;top:490.8px;font-family:'Liberation Sans',sans-serif;font-size:7px;color:#111;transform:scaleX(0.8803);transform-origin:0 0;">1510.861252,&nbsp; -1399.291503,&nbsp; 0.000000</div>
<div class="t" style="left:423.3px;top:490.8px;font-family:'Liberation Sans',sans-serif;font-size:6.6px;color:#111;transform:scaleX(0.8786);transform-origin:0 0;">栅格</div>
<div class="t" style="left:441.7px;top:490.8px;font-family:'Liberation Sans',sans-serif;font-size:6.6px;color:#111;transform:scaleX(0.8071);transform-origin:0 0;">正交</div>
<div class="t" style="left:458.7px;top:490.8px;font-family:'Liberation Sans',sans-serif;font-size:6.6px;color:#111;transform:scaleX(0.8286);transform-origin:0 0;">极轴</div>
<div class="a" style="left:475px;top:488.5px;width:28px;height:11px;background:#dbe8f4;border:1px solid #9ab4d0"></div>
<div class="t" style="left:477px;top:490.8px;font-family:'Liberation Sans',sans-serif;font-size:6.6px;color:#111;transform:scaleX(0.8571);transform-origin:0 0;">对象捕捉</div>
<div class="a" style="left:504px;top:488.5px;width:28.5px;height:11px;background:#dbe8f4;border:1px solid #9ab4d0"></div>
<div class="t" style="left:506px;top:490.8px;font-family:'Liberation Sans',sans-serif;font-size:6.6px;color:#111;transform:scaleX(0.8750);transform-origin:0 0;">对象追踪</div>
<div class="a" style="left:533.5px;top:488.5px;width:16px;height:11px;background:#dbe8f4;border:1px solid #9ab4d0"></div>
<div class="t" style="left:535.5px;top:490.8px;font-family:'Liberation Sans',sans-serif;font-size:6.6px;color:#111;transform:scaleX(0.8620);transform-origin:0 0;">DYN</div>
<div class="a" style="left:551px;top:488.5px;width:16.5px;height:11px;background:#dbe8f4;border:1px solid #9ab4d0"></div>
<div class="t" style="left:553px;top:490.8px;font-family:'Liberation Sans',sans-serif;font-size:6.6px;color:#111;transform:scaleX(0.8929);transform-origin:0 0;">线宽</div>
<div class="t" style="left:571.4px;top:490.8px;font-family:'Liberation Sans',sans-serif;font-size:6.6px;color:#2a44d8;text-decoration:underline;-webkit-text-stroke:0;transform:scaleX(0.8321);transform-origin:0 0;">提交软件问题或增加新功能</div>
<svg class="a" style="left:648px;top:488px" width="12" height="11" viewBox="0 0 12 11"><path d="M2.5 3l2.2 3-2.2 3M9 3l-2.2 3 2.2 3" fill="none" stroke="#1f9a80" stroke-width="1.7"/><circle cx="3" cy="3.2" r="1.1" fill="#1f9a80"/><circle cx="8.6" cy="3.2" r="1.1" fill="#1f9a80"/></svg>
<div class="t" style="left:658.8px;top:491px;font-family:'Liberation Sans',sans-serif;font-size:7px;color:#2a3340;transform:scaleX(0.8912);transform-origin:0 0;">MxCAD</div>
<svg class="a" style="left:582px;top:453px" width="46" height="36" viewBox="0 0 46 36"><rect x="1" y="0.5" width="44" height="35" rx="3" fill="#555"/><rect x="5.5" y="5" width="35" height="25" fill="#fff"/><path d="M5.5 30 V26 Q12 22 18 24 Q24 26 28 18 Q31 12 35 16 Q39 22 40.5 26 V30z" fill="#555"/><path d="M8 20 L12 7 H15.5 L19.5 20 H16.5 L15.7 17 H11.8 L11 20z M12.5 14.5 H15 L13.8 10z" fill="#555"/><rect x="21" y="7" width="3" height="13" fill="#555"/></svg>
<div class="t" style="left:641px;top:456.5px;font-family:'Liberation Sans',sans-serif;font-size:8px;color:#cfcfcf;-webkit-text-stroke:0;transform:scaleX(1.3750);transform-origin:0 0;">激活 Win</div>
<div class="t" style="left:631.5px;top:464px;font-family:'Liberation Sans',sans-serif;font-size:16px;color:#555;-webkit-text-stroke:0.7px #555;transform:scaleX(0.9437);transform-origin:0 0;">树叶云</div>
<svg class="a" style="left:640px;top:455px" width="44" height="33" viewBox="0 0 44 33"><path d="M36 7l2-2 2 2M36 19l2 2 2-2M5 27l-2 2 2 2M30 27l2 2-2 2" fill="none" stroke="#444" stroke-width=".9"/><rect x="8" y="25" width="7" height="7" fill="#c0c4cc"/></svg>
</body></html>
